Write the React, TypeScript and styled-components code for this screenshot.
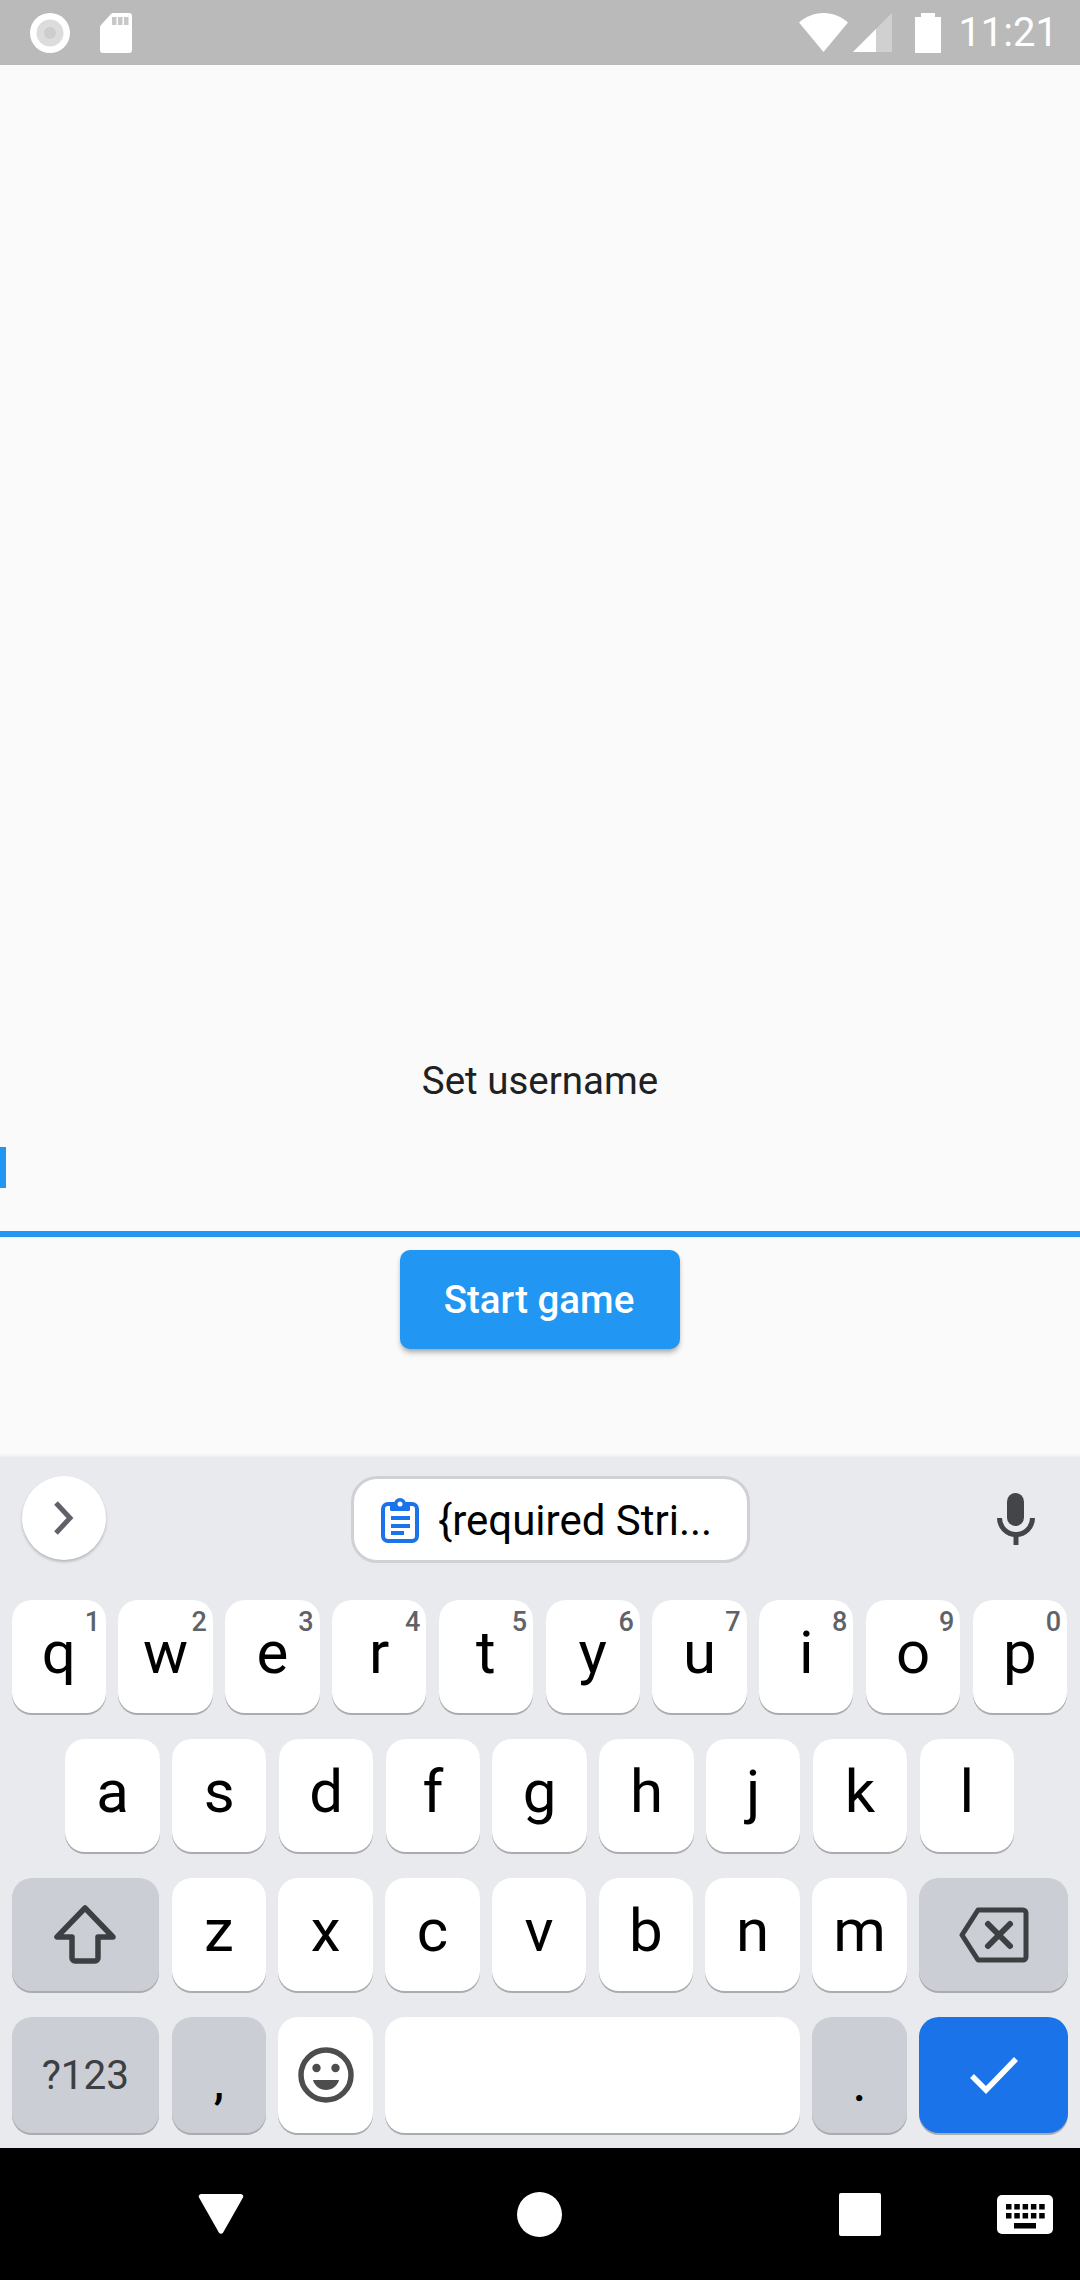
import React from "react";
import styled, { createGlobalStyle } from "styled-components";

const Global = createGlobalStyle`
  html, body { margin: 0; padding: 0; background: #fafafa; }
  * { box-sizing: border-box; }
  body { font-family: Roboto, "Liberation Sans", sans-serif; }
`;

const Screen = styled.div`
  width: 1080px;
  height: 2280px;
  display: flex;
  flex-direction: column;
  overflow: hidden;
`;

const StatusBar = styled.header`
  height: 65px;
  flex: none;
  background: #bababa;
  display: flex;
  align-items: center;
  padding: 0 22px 0 30px;
  color: #fff;
`;

const StatusLeft = styled.div`
  display: flex;
  align-items: center;
  gap: 30px;
  flex: 1;
`;

const StatusRight = styled.div`
  display: flex;
  align-items: center;
  gap: 5px;
`;

const Battery = styled.svg`
  margin-left: 18px;
`;

const Clock = styled.span`
  font-size: 40px;
  line-height: 46px;
  margin-left: 12px;
`;

const Main = styled.main`
  height: 1392px;
  flex: none;
  background: #fafafa;
  display: flex;
  flex-direction: column;
  justify-content: flex-end;
  align-items: center;
  padding-bottom: 108px;
`;

const Label = styled.div`
  font-size: 38.5px;
  line-height: 44px;
  color: #212121;
  margin-bottom: 44px;
`;

const InputField = styled.div`
  width: 100%;
  height: 90px;
  border-bottom: 6px solid #2196f3;
`;

const Caret = styled.div`
  width: 6px;
  height: 41px;
  background: #2196f3;
`;

const StartButton = styled.button`
  width: 280px;
  height: 99px;
  margin-top: 13px;
  padding: 0 2px 0 0;
  border: 0;
  border-radius: 10px;
  background: #2196f3;
  color: #fff;
  font-family: Roboto, sans-serif;
  font-size: 38.5px;
  font-weight: 500;
  box-shadow: 0 5px 6px -2px rgba(0, 0, 0, 0.28), 0 2px 4px rgba(0, 0, 0, 0.12);
`;

const Keyboard = styled.section`
  flex: none;
  height: 691px;
  background: #e8eaed;
  box-shadow: 0 -1px 3px rgba(0, 0, 0, 0.08);
  display: flex;
  flex-direction: column;
`;

const Strip = styled.div`
  height: 143px;
  flex: none;
  display: grid;
  grid-template-columns: 351px 399px 1fr;
  align-items: center;
  padding-bottom: 19px;
`;

const CircleButton = styled.div`
  width: 84px;
  height: 84px;
  margin: 0 0 2px 22px;
  border-radius: 50%;
  background: #fff;
  box-shadow: 0 2px 3px rgba(0, 0, 0, 0.22);
  display: flex;
  align-items: center;
  justify-content: center;
`;

const Chip = styled.div`
  height: 87px;
  border: 3px solid #cfd1d5;
  border-radius: 26px;
  background: #fff;
  display: flex;
  align-items: center;
  padding: 2px 0 0 27px;
  gap: 19px;
  font-size: 42px;
  color: #000;
  white-space: nowrap;
`;

const MicSlot = styled.div`
  display: flex;
  justify-content: flex-end;
  padding-right: 45px;
`;

const Rows = styled.div`
  display: flex;
  flex-direction: column;
  gap: 26px;
`;

const Row = styled.div<{ $inset?: number; $height?: number }>`
  display: flex;
  gap: 12.4px;
  height: ${(p) => p.$height ?? 113}px;
  padding: 0 12px 0 ${(p) => p.$inset ?? 11.6}px;
`;

const Key = styled.div<{ $tone?: "light" | "dark" | "blue"; $width?: number; $grow?: boolean }>`
  position: relative;
  width: ${(p) => p.$width ?? 94.4}px;
  flex: ${(p) => (p.$grow ? "1" : "none")};
  border-radius: 20px;
  background: ${(p) => (p.$tone === "dark" ? "#cbced5" : p.$tone === "blue" ? "#1a73e8" : "#fff")};
  box-shadow: 0 2px 0 #abacaf;
  display: flex;
  align-items: center;
  justify-content: center;
  color: #000;
  font-size: 60px;
  line-height: 1;
`;

const Letter = styled.span`
  transform: translateY(-4px);
`;

const Hint = styled.span`
  position: absolute;
  top: 6px;
  right: 6px;
  font-size: 27px;
  line-height: 32px;
  font-weight: 500;
  color: #5f6368;
`;

const Symbols = styled.span`
  font-size: 40.5px;
  color: #3c4043;
`;

const Punct = styled.span<{ $drop: number }>`
  font-size: 46px;
  font-weight: 500;
  transform: translateY(${(p) => p.$drop}px);
`;

const NavBar = styled.nav`
  flex: none;
  height: 132px;
  background: #000;
  display: flex;
  align-items: center;
  padding-left: 198px;
`;

const NavIcon = styled.svg<{ $offset?: number }>`
  flex: none;
  margin-left: ${(p) => p.$offset ?? 0}px;
`;

const row1: [string, string][] = [
  ["q", "1"], ["w", "2"], ["e", "3"], ["r", "4"], ["t", "5"],
  ["y", "6"], ["u", "7"], ["i", "8"], ["o", "9"], ["p", "0"],
];
const row2 = ["a", "s", "d", "f", "g", "h", "j", "k", "l"];
const row3 = ["z", "x", "c", "v", "b", "n", "m"];

export default function App() {
  return (
    <Screen>
      <Global />
      <StatusBar>
        <StatusLeft>
          <svg width="40" height="40" viewBox="0 0 40 40">
            <circle cx="20" cy="20" r="20" fill="#fff" />
            <circle cx="20" cy="20" r="13.5" fill="#dcdcdc" />
            <circle cx="20" cy="20" r="6" fill="#cdcdcd" />
          </svg>
          <svg width="32" height="40" viewBox="0 0 32 40">
            <path d="M13 0h16a3 3 0 0 1 3 3v34a3 3 0 0 1-3 3H3a3 3 0 0 1-3-3V14a3 3 0 0 1 1-2L11 1a3 3 0 0 1 2-1z" fill="#fff" />
            <path d="M12 4h4.500v8H12zM18 4h4.500v8H18zM24 4h4.500v8H24z" fill="#c8c8c8" />
          </svg>
        </StatusLeft>
        <StatusRight>
          <svg width="49" height="39" viewBox="0 0 49 39">
            <path d="M24.500 39 0 9.500C6 4 15 0 24.500 0S43 4 49 9.500z" fill="#fff" />
          </svg>
          <svg width="39" height="39" viewBox="0 0 39 39">
            <path d="M39 0v39H0z" fill="#d0d0d0" />
            <path d="M23 16v23H0z" fill="#fff" />
          </svg>
          <Battery width="26" height="40" viewBox="0 0 26 40">
            <path d="M6 0h14v4h6v36H0V4h6z" fill="#fff" />
          </Battery>
          <Clock>11:21</Clock>
        </StatusRight>
      </StatusBar>

      <Main>
        <Label>Set username</Label>
        <InputField>
          <Caret />
        </InputField>
        <StartButton>Start game</StartButton>
      </Main>

      <Keyboard>
        <Strip>
          <CircleButton>
            <svg width="24" height="36" viewBox="0 0 24 36">
              <path d="M4 3l14 15L4 33" fill="none" stroke="#5f6368" strokeWidth="5" />
            </svg>
          </CircleButton>
          <Chip>
            <svg width="38" height="45" viewBox="0 0 38 45">
              <rect x="2" y="6" width="34" height="37" rx="5" fill="none" stroke="#1a73e8" strokeWidth="4" />
              <rect x="9" y="5" width="20" height="8" rx="1.500" fill="#1a73e8" />
              <circle cx="19" cy="6" r="6" fill="#1a73e8" />
              <circle cx="19" cy="6" r="2.500" fill="#fff" />
              <path d="M10 18h19v4H10zM10 26h19v4H10zM10 33h13v4H10z" fill="#1a73e8" />
            </svg>
            <span>{"{required Stri..."}</span>
          </Chip>
          <MicSlot>
            <svg width="38" height="52" viewBox="0 0 38 52">
              <rect x="10" y="0" width="17" height="33" rx="8.500" fill="#444548" />
              <path d="M2.500 25a16.500 16.500 0 0 0 33 0" fill="none" stroke="#444548" strokeWidth="5" />
              <rect x="16.500" y="40" width="5" height="12" fill="#444548" />
            </svg>
          </MicSlot>
        </Strip>

        <Rows>
          <Row>
            {row1.map(([l, n]) => (
              <Key key={l}>
                <Letter>{l}</Letter>
                <Hint>{n}</Hint>
              </Key>
            ))}
          </Row>
          <Row $inset={65.3}>
            {row2.map((l) => (
              <Key key={l}>
                <Letter>{l}</Letter>
              </Key>
            ))}
          </Row>
          <Row>
            <Key $tone="dark" $width={147.6}>
              <svg width="62" height="60" viewBox="0 0 62 60">
                <path
                  d="M31 3 3 32h15v21a3 3 0 0 0 3 3h20a3 3 0 0 0 3-3V32h15z"
                  fill="none"
                  stroke="#3c4043"
                  strokeWidth="5.500"
                  strokeLinejoin="round"
                />
              </svg>
            </Key>
            {row3.map((l) => (
              <Key key={l}>
                <Letter>{l}</Letter>
              </Key>
            ))}
            <Key $tone="dark" $grow>
              <svg width="70" height="56" viewBox="0 0 70 56">
                <path
                  d="M19 3h45a3 3 0 0 1 3 3v44a3 3 0 0 1-3 3H19L3 28z"
                  fill="none"
                  stroke="#3c4043"
                  strokeWidth="5"
                  strokeLinejoin="round"
                />
                <path d="M29 17l22 22M51 17 29 39" stroke="#3c4043" strokeWidth="6" strokeLinecap="round" />
              </svg>
            </Key>
          </Row>
          <Row $height={116}>
            <Key $tone="dark" $width={147.6}>
              <Symbols>?123</Symbols>
            </Key>
            <Key $tone="dark">
              <Punct $drop={7}>,</Punct>
            </Key>
            <Key>
              <svg width="56" height="56" viewBox="0 0 56 56">
                <circle cx="28" cy="28" r="25" fill="none" stroke="#4d4d4d" strokeWidth="5.500" />
                <circle cx="18.500" cy="21" r="4.200" fill="#4d4d4d" />
                <circle cx="37.500" cy="21" r="4.200" fill="#4d4d4d" />
                <path d="M15 33h26c-1.500 6-7 10-13 10s-11.500-4-13-10z" fill="#4d4d4d" />
              </svg>
            </Key>
            <Key $grow />
            <Key $tone="dark">
              <Punct $drop={10}>.</Punct>
            </Key>
            <Key $tone="blue" $width={149}>
              <svg width="50" height="40" viewBox="0 0 50 40">
                <path d="M3 21l14 14L47 4" fill="none" stroke="#fff" strokeWidth="5.500" />
              </svg>
            </Key>
          </Row>
        </Rows>
      </Keyboard>

      <NavBar>
        <NavIcon width="46" height="40" viewBox="0 0 46 40">
          <path d="M3 0h40a2.500 2.500 0 0 1 2 3.600L25 38.800a2.400 2.400 0 0 1-4 0L1 3.600A2.500 2.500 0 0 1 3 0z" fill="#fff" />
        </NavIcon>
        <NavIcon $offset={273} width="45" height="45" viewBox="0 0 45 45">
          <circle cx="22.500" cy="22.500" r="22.500" fill="#fff" />
        </NavIcon>
        <NavIcon $offset={277} width="42" height="43" viewBox="0 0 42 43">
          <rect width="42" height="43" rx="2" fill="#fff" />
        </NavIcon>
        <NavIcon $offset={116} width="56" height="39" viewBox="0 0 56 39">
          <rect width="56" height="39" rx="5" fill="#fff" />
          <path
            d="M9 9h5.500v5.500H9zM17.300 9h5.500v5.500h-5.500zM25.600 9h5.500v5.500h-5.500zM33.900 9h5.500v5.500h-5.500zM42.200 9h5.500v5.500h-5.500zM9 18h5.500v5.500H9zM17.300 18h5.500v5.500h-5.500zM25.600 18h5.500v5.500h-5.500zM33.900 18h5.500v5.500h-5.500zM42.200 18h5.500v5.500h-5.500zM17 28h22v5.500H17z"
            fill="#000"
          />
        </NavIcon>
      </NavBar>
    </Screen>
  );
}
